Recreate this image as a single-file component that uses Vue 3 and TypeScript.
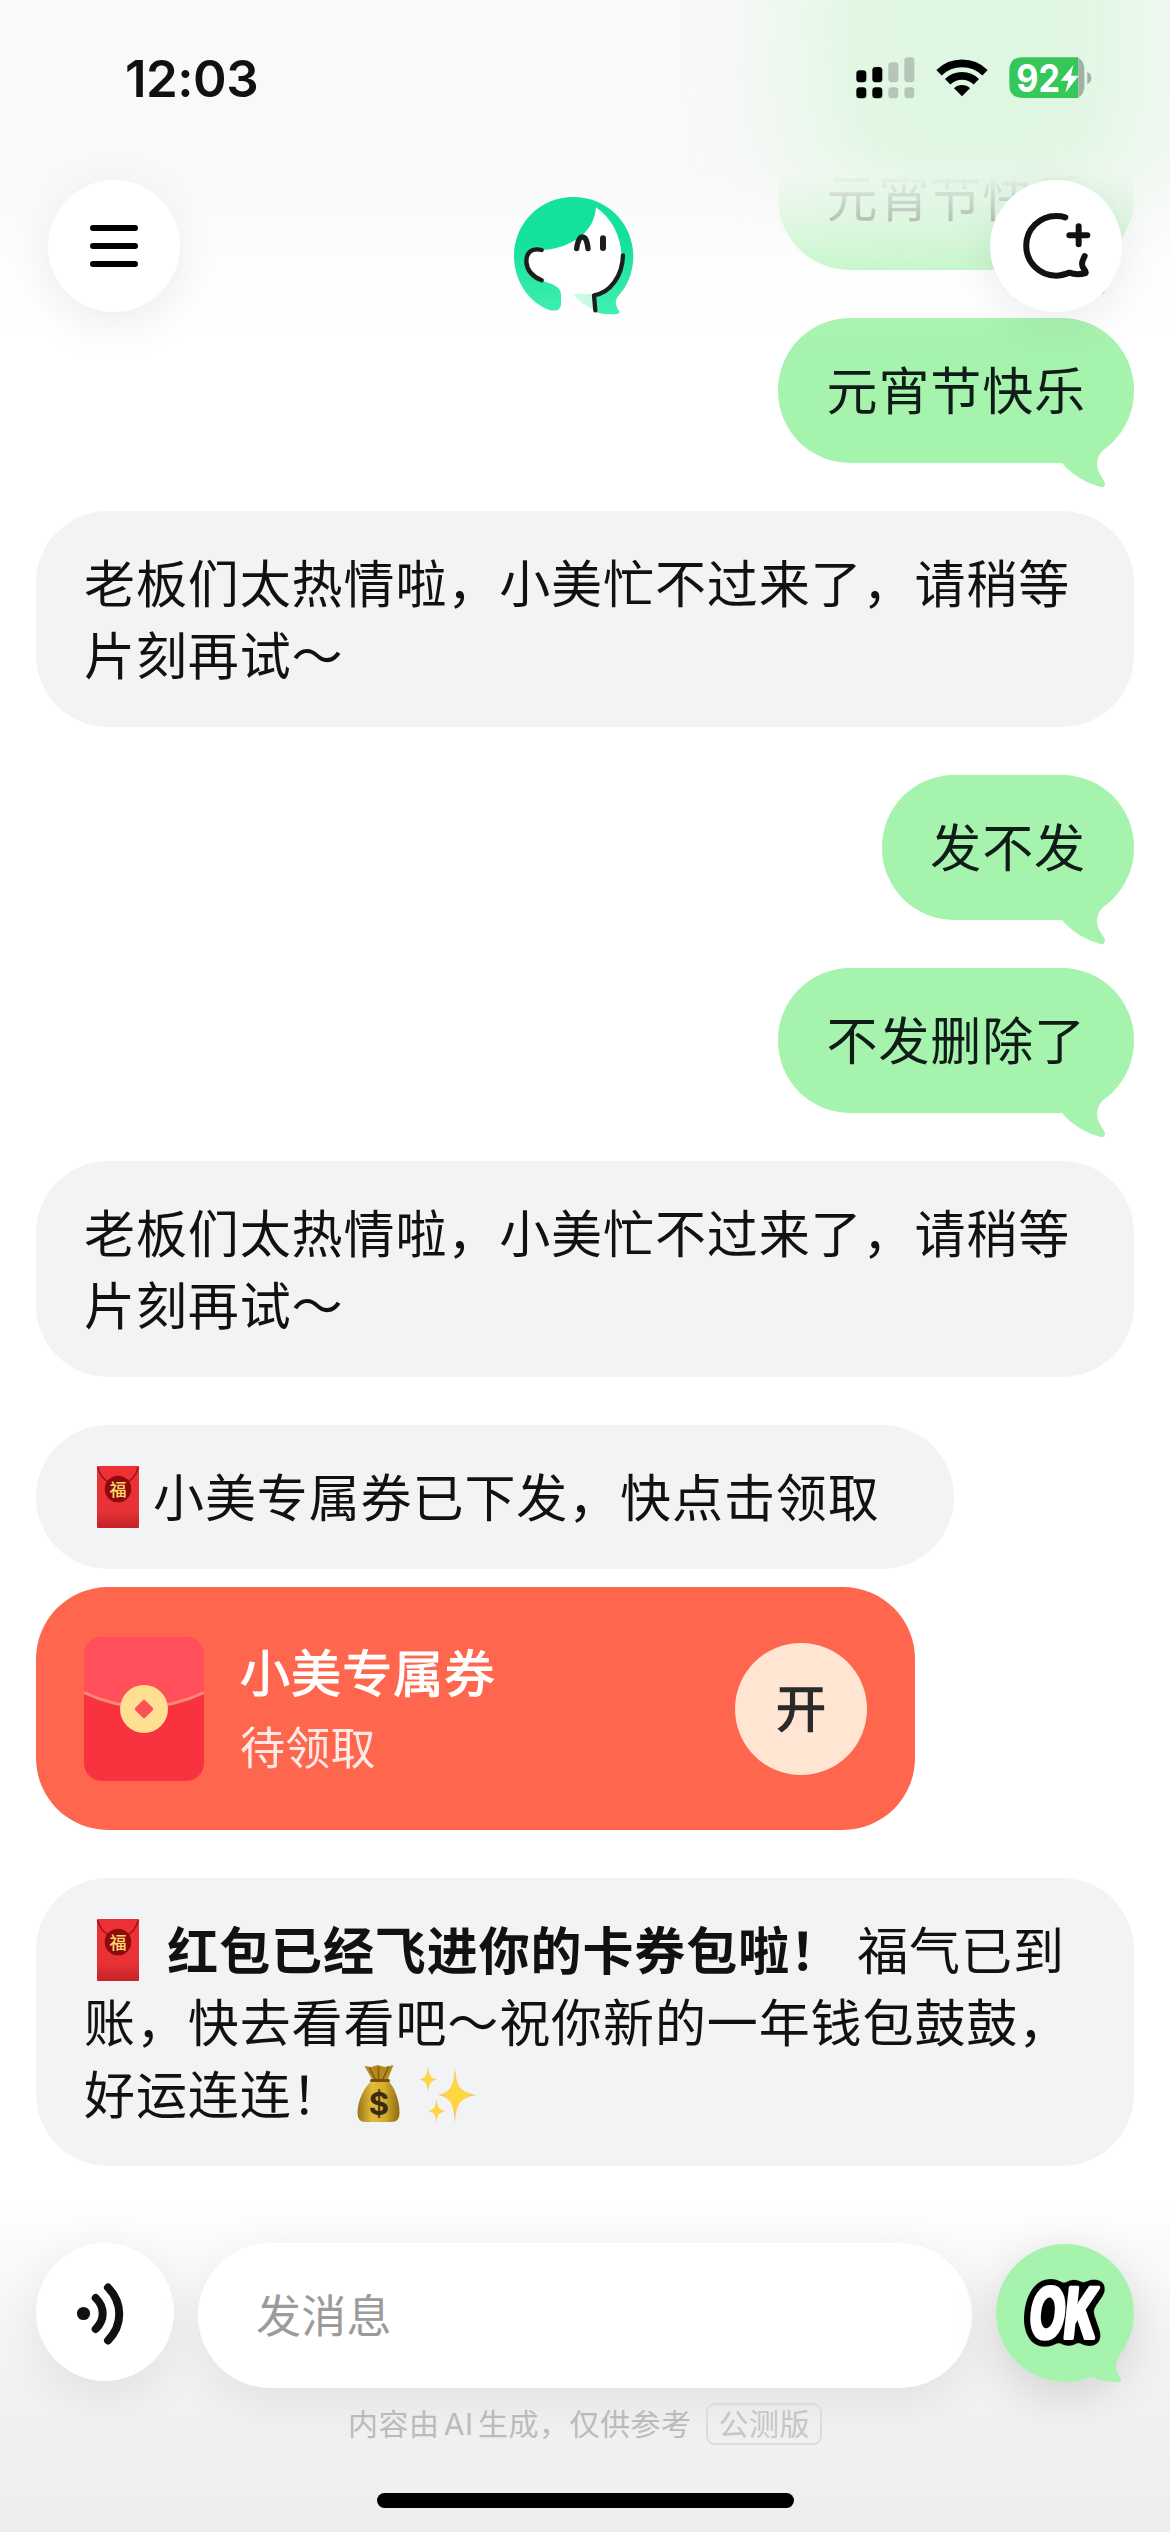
<script setup lang="ts">
interface UserMessage {
  kind: 'user'
  text: string
}
interface BotMessage {
  kind: 'bot'
  text: string
}
type Message = UserMessage | BotMessage

const messages: Message[] = [
  { kind: 'user', text: '元宵节快乐' },
  { kind: 'user', text: '元宵节快乐' },
  { kind: 'bot', text: '老板们太热情啦，小美忙不过来了，请稍等片刻再试～' },
  { kind: 'user', text: '发不发' },
  { kind: 'user', text: '不发删除了' },
  { kind: 'bot', text: '老板们太热情啦，小美忙不过来了，请稍等片刻再试～' },
]
</script>

<template>
  <div class="screen">
    <svg class="defs" width="0" height="0" aria-hidden="true">
      <defs>
        <linearGradient id="envRed" x1="0" y1="0" x2="0" y2="1">
          <stop offset="0" stop-color="#ee3035" />
          <stop offset="0.7" stop-color="#e83336" />
          <stop offset="1" stop-color="#c32327" />
        </linearGradient>
        <linearGradient id="bagGold" x1="0" y1="0" x2="1" y2="0">
          <stop offset="0" stop-color="#9a7414" />
          <stop offset="0.35" stop-color="#e2bb3a" />
          <stop offset="0.65" stop-color="#d6ab2c" />
          <stop offset="1" stop-color="#8f6a12" />
        </linearGradient>
        <radialGradient id="spark">
          <stop offset="0" stop-color="#ffd83a" />
          <stop offset="0.5" stop-color="#ffd44a" />
          <stop offset="1" stop-color="#f7b77a" />
        </radialGradient>
        <symbol id="redEnvelope" viewBox="0 0 68 72">
          <rect x="13" y="5" width="42" height="62" rx="1" fill="url(#envRed)" />
          <path d="M13.500 6C16 15 21 20 27 22M54.500 6C52 15 47 20 41 22" fill="none" stroke="#9c1519" stroke-width="1.500" />
          <circle cx="34" cy="28" r="13.300" fill="#8d0a0e" />
        </symbol>
      </defs>
    </svg>

    <main class="chat">
      <template v-for="(m, i) in messages" :key="i">
        <div v-if="m.kind === 'user'" class="bubble user">
          {{ m.text }}
          <svg class="tail" viewBox="0 0 80 60"><path d="M53 13C44 21 42 28 43.500 35C45 42 50 46 51 50Q51 55 46.500 54C32 50 18 42 8 30L20 8Z" fill="#a6f3ae" /></svg>
        </div>
        <div v-else class="bubble bot wide">{{ m.text }}</div>
      </template>

      <div class="coupon-group">
        <div class="bubble bot notice">
          <svg class="emoji lead" viewBox="0 0 68 72"><use href="#redEnvelope" /><text x="34" y="34.500" class="fu">福</text></svg>小美专属券已下发，快点击领取
        </div>
        <div class="coupon">
          <svg class="packet" viewBox="0 0 120 144">
            <rect width="120" height="144" rx="18" fill="#f9323f" />
            <path d="M18 0H102A18 18 0 0 1 120 18V55.500Q60 84 0 55.500V18A18 18 0 0 1 18 0Z" fill="#ff4f5a" />
            <path d="M0 55.500Q60 84 120 55.500" fill="none" stroke="#ff8a78" stroke-width="3" />
            <circle cx="60" cy="73" r="24" fill="#e82c38" opacity="0.5" />
            <circle cx="60" cy="72" r="24" fill="#ffdf92" />
            <rect x="53" y="65" width="14" height="14" rx="2" fill="#f9505a" transform="rotate(45 60 72)" />
          </svg>
          <div class="coupon-text">
            <div class="coupon-title">小美专属券</div>
            <div class="coupon-state">待领取</div>
          </div>
          <button class="open">开</button>
        </div>
      </div>

      <div class="bubble bot wide">
        <svg class="emoji" viewBox="0 0 68 72"><use href="#redEnvelope" /><text x="34" y="34.500" class="fu">福</text></svg>&nbsp;<b>红包已经飞进你的卡券包啦！</b> 福气已到账，快去看看吧～祝你新的一年钱包鼓鼓，好运连连！<svg class="emoji" viewBox="-0.500 0 68 72">
          <path d="M20 8L27 9L33 7L40 9L49 7L43 22H28Z" fill="#b48a1c" />
          <path d="M25 10L31 22M34 9V22M44 9L38 22" stroke="#7d5c10" stroke-width="1.500" fill="none" />
          <path d="M28 22H43C50 29 55 42 55 55Q55 64 47 64H21Q13 64 13 55C13 42 20 29 28 22Z" fill="url(#bagGold)" />
          <path d="M27 22.500H44" stroke="#7a4c12" stroke-width="3" stroke-linecap="round" />
          <text x="34.500" y="57" class="dollar">$</text>
        </svg><svg class="emoji" viewBox="-1 0 68 72">
          <path d="M42 9C43.500 28 46 34 64 37C46 40 43.500 46 42 65C40.500 46 38 40 25 37C38 34 40.500 28 42 9Z" fill="url(#spark)" />
          <path d="M15 8C16 17 17 20 24 21.500C17 23 16 26 15 34C14 26 13 23 6.500 21.500C13 20 14 17 15 8Z" fill="url(#spark)" />
          <path d="M23.500 41C24.500 49 25.500 51.500 33 53C25.500 54.500 24.500 57 23.500 65C22.500 57 21.500 54.500 15 53C21.500 51.500 22.500 49 23.500 41Z" fill="url(#spark)" />
        </svg>
      </div>
    </main>

    <div class="top-fade"></div>
    <div class="glow"><i></i></div>

    <header class="top">
      <div class="status">
        <span class="time">12:03</span>
        <svg class="status-icons" viewBox="0 0 720 126">
          <g fill="#000">
            <rect x="1" y="40" width="30" height="36" rx="10" /><rect x="49" y="30" width="30" height="46" rx="10" />
            <rect x="1" y="91" width="30" height="33" rx="10" /><rect x="49" y="91" width="30" height="33" rx="10" />
          </g>
          <g fill="#b5c6b8">
            <rect x="97" y="16" width="30" height="60" rx="10" /><rect x="145" y="1" width="30" height="75" rx="10" />
            <rect x="97" y="91" width="30" height="33" rx="10" /><rect x="145" y="91" width="30" height="33" rx="10" />
          </g>
          <g transform="translate(-467 -170)">
            <path d="M716 217A99 99 0 0 1 854 217M742 244A61.500 61.500 0 0 1 828 244" fill="none" stroke="#000" stroke-width="23" />
            <path d="M785 288L761 264A34 34 0 0 1 809 264Z" />
            <path d="M967 171H1134V293H967Q927 293 927 253V211Q927 171 967 171Z" fill="#35c759" />
            <path d="M1134 173Q1152 181 1152 208V256Q1152 283 1134 291Z" fill="#a3aea5" />
            <path d="M1161 215Q1173 220 1173 233Q1173 246 1161 251Z" fill="#a3aea5" />
            <text x="948" y="274" class="pct" textLength="131" lengthAdjust="spacingAndGlyphs">92</text>
            <path d="M1119 194L1081 241H1104L1095 277L1135 226H1112Z" fill="#fff" />
          </g>
        </svg>
      </div>
      <div class="nav">
        <button class="round"><svg width="48" height="42" viewBox="0 0 48 42"><path d="M3 3H45M3 21H45M3 39H45" stroke="#000" stroke-width="6" stroke-linecap="round" /></svg></button>
        <svg class="avatar" viewBox="72 52 360 354">
          <defs>
            <linearGradient id="hair" x1="0" y1="0" x2="0" y2="1"><stop offset="0.400" stop-color="#14e29b" /><stop offset="1" stop-color="#42efaf" /></linearGradient>
          </defs>
          <path d="M318 83L155 205L110 210L105 280L213 320V392L316 395L400 300L405 200Z" fill="#fff" />
          <path d="M318 83C314 132 290 165 240 190C212 204 185 210 158 211C125 206 108 222 108 245C110 272 128 292 155 303C190 313 213 322 213 345V372C213 390 200 396 178 391C115 370 72 300 72 230C72 130 150 52 250 52C350 52 430 130 430 230C430 280 410 322 387 347C373 362 375 375 388 396C390 404 380 404 360 404C345 404 330 401 318 397L312 350C360 335 392 290 395 230C393 170 365 115 318 83Z" fill="url(#hair)" />
          <path d="M250 342L308 343L310 389C285 378 265 364 250 342Z" fill="#cbfae4" />
          <path d="M155 211C122 203 108 222 109 247C111 272 128 291 155 302M399 227C397 290 360 340 312 347L316 392" fill="none" stroke="#1b1e1d" stroke-width="13" stroke-linecap="round" stroke-linejoin="round" />
          <path d="M260 207C263 184 269 172 277 172C286 172 292 184 294 207" fill="none" stroke="#1b1e1d" stroke-width="16" stroke-linecap="round" />
          <path d="M339 176V205" stroke="#1b1e1d" stroke-width="18" stroke-linecap="round" />
        </svg>
        <button class="round">
          <svg width="132" height="132" viewBox="870 540 396 396" fill="none" stroke="#111" stroke-width="18" stroke-linecap="round" stroke-linejoin="round">
            <path d="M1096 652C1087 649 1078 648 1068 648A89.500 89.500 0 0 0 1068 827C1083 827 1095 823 1108 818C1122 823 1143 823 1157 819C1160 812 1146 806 1146 792C1146 782 1151 776 1154 768" />
            <path d="M1108 706H1162M1136 679V733" />
          </svg>
        </button>
      </div>
    </header>

    <footer class="bottom">
      <div class="composer">
        <button class="round voice">
          <svg width="138" height="138" viewBox="0 0 138 138" fill="none" stroke="#111" stroke-width="8" stroke-linecap="round">
            <circle cx="47.500" cy="70.500" r="6.600" fill="#111" stroke="none" />
            <path d="M59.700 55C69 64 69 77 59.700 86M72 44.500C87 60 87 82 72 97.500" />
          </svg>
        </button>
        <div class="input">发消息</div>
        <button class="ok">
          <svg width="138" height="138" viewBox="0 0 138 138">
            <defs>
              <filter id="okOutline" filterUnits="userSpaceOnUse" x="0" y="0" width="138" height="138" color-interpolation-filters="sRGB">
                <feMorphology in="SourceGraphic" operator="dilate" radius="1 0" result="fat" />
                <feGaussianBlur in="fat" stdDeviation="4.500" result="soft" />
                <feColorMatrix in="soft" type="matrix" values="0 0 0 0 0  0 0 0 0 0  0 0 0 0 0  0 0 0 30 -1.500" result="outline" />
                <feMerge><feMergeNode in="outline" /><feMergeNode in="fat" /></feMerge>
              </filter>
            </defs>
            <circle cx="69" cy="69" r="69" fill="#a6f3ae" />
            <path d="M131 100C123 112 119 117 120 124C121 130 125 133 125 136Q125 138 121 138C112 138 104 137 96 133L90 100Z" fill="#a6f3ae" />
            <g filter="url(#okOutline)">
              <text class="ok-text" x="0" y="0" transform="translate(65 94) skewX(-6) scale(0.650 1)">OK</text>
            </g>
          </svg>
        </button>
      </div>
      <div class="disclaimer"><span class="note">内容由 AI 生成，仅供参考</span><span class="beta">公测版</span></div>
      <div class="home"></div>
    </footer>
  </div>
</template>

<style>
body {
  margin: 0;
  background: #fff;
}
</style>

<style scoped>
.screen {
  position: relative;
  width: 1170px;
  height: 2532px;
  overflow: hidden;
  background: #fff;
  color: #111;
  font-family: Inter, "Noto Sans CJK SC", sans-serif;
  text-spacing-trim: space-all;
}
button {
  border: 0;
  padding: 0;
  font: inherit;
  color: inherit;
}
svg {
  display: block;
  overflow: visible;
}
.defs {
  position: absolute;
}

.chat {
  display: flex;
  flex-direction: column;
  align-items: flex-start;
  gap: 48px;
  padding: 125px 36px 0;
}
.bubble {
  box-sizing: border-box;
  padding: 38px 48px 34px;
  border-radius: 72px;
  font-size: 51px;
  line-height: 72px;
  letter-spacing: 0.9px;
}
.user {
  position: relative;
  align-self: flex-end;
  height: 145px;
  background: #a6f3ae;
  color: #101c18;
}
.tail {
  position: absolute;
  right: 0;
  bottom: -30px;
  width: 80px;
  height: 60px;
}
.bot {
  background: #f2f3f5;
}
.wide {
  width: 1098px;
}
.emoji {
  display: inline-block;
  width: 68px;
  height: 72px;
  margin: -2px 0 2px;
  vertical-align: top;
}
.lead {
  margin-right: 1px;
}
.fu {
  font: 500 17px "Noto Sans CJK SC", sans-serif;
  fill: #ffd76a;
  text-anchor: middle;
  letter-spacing: 0;
}
.dollar {
  font: 700 31px Inter, sans-serif;
  fill: #3a2c10;
  text-anchor: middle;
  letter-spacing: 0;
}
.coupon-group {
  display: flex;
  flex-direction: column;
  gap: 18px;
}
.notice {
  width: 918px;
}
.coupon {
  box-sizing: border-box;
  display: flex;
  align-items: center;
  width: 879px;
  height: 243px;
  padding: 0 48px;
  border-radius: 72px;
  background: #ff664e;
}
.packet {
  width: 120px;
  height: 144px;
}
.coupon-text {
  flex: 1;
  margin-left: 36px;
  padding-top: 3px;
  color: #fff;
}
.coupon-title {
  font-size: 50px;
  line-height: 76px;
  letter-spacing: 1.1px;
  -webkit-text-stroke: 1.2px #fff;
}
.coupon-state {
  font-size: 45px;
  line-height: 73px;
  letter-spacing: 0.3px;
  opacity: 0.86;
}
.open {
  width: 132px;
  height: 132px;
  border-radius: 50%;
  background: #ffe5d2;
  color: #2b2b2b;
  font-size: 50px;
  line-height: 133px;
  -webkit-text-stroke: 1.4px #2b2b2b;
}

.top-fade {
  position: absolute;
  inset: 0 0 auto;
  height: 340px;
  background: linear-gradient(
    #f9f9f9 0 174px,
    rgba(249, 249, 249, 0.86) 195px,
    rgba(250, 250, 250, 0.68) 228px,
    rgba(252, 252, 252, 0.4) 270px,
    rgba(254, 254, 254, 0.08) 318px,
    rgba(255, 255, 255, 0) 340px
  );
}
.glow {
  position: absolute;
  inset: 0 0 auto;
  height: 340px;
  overflow: hidden;
  mask-image: linear-gradient(#000 0 150px, transparent 310px);
}
.glow i {
  position: absolute;
  top: -180px;
  left: 800px;
  width: 350px;
  height: 410px;
  border-radius: 110px;
  background: #a6f3ae;
  opacity: 0.31;
  filter: blur(58px);
}

.top {
  position: absolute;
  inset: 0 0 auto;
}
.status {
  display: flex;
  justify-content: space-between;
  align-items: center;
  height: 156px;
  padding: 0 74px 0 125px;
}
.time {
  font-size: 51px;
  font-weight: 600;
  letter-spacing: -0.5px;
}
.status-icons {
  width: 240px;
  height: 42px;
}
.pct {
  font: 700 115px Inter, sans-serif;
  fill: #fff;
}
.nav {
  display: flex;
  justify-content: space-between;
  padding: 24px 48px 0;
}
.round {
  display: flex;
  align-items: center;
  justify-content: center;
  width: 132px;
  height: 132px;
  border-radius: 50%;
  background: #fff;
  box-shadow: 0 12px 48px rgba(0, 0, 0, 0.08);
}
.avatar {
  width: 120px;
  height: 118px;
  margin: 17px 0 0 -22px;
}

.bottom {
  position: absolute;
  inset: auto 0 0;
  height: 332px;
  background: linear-gradient(rgba(255, 255, 255, 0), #fbfbfb 40px, #f2f2f2 180px, #eeeeee);
}
.composer {
  display: flex;
  gap: 24px;
  padding: 43px 36px 0;
}
.voice {
  width: 138px;
  height: 138px;
}
.input {
  flex: 1;
  height: 145px;
  padding-left: 58px;
  border-radius: 73px;
  background: #fff;
  box-shadow: 0 12px 48px rgba(0, 0, 0, 0.07);
  color: #9b9b9b;
  font-size: 45px;
  line-height: 147px;
  letter-spacing: 0.3px;
}
.ok {
  width: 138px;
  height: 138px;
  margin-top: 1px;
  border-radius: 50%;
  background: none;
  box-shadow: 0 12px 48px rgba(0, 0, 0, 0.14);
}
.ok-text {
  font: 600 69px Inter, sans-serif;
  fill: #fff;
  stroke: #fff;
  stroke-width: 4px;
  stroke-linejoin: round;
  text-anchor: middle;
}
.disclaimer {
  display: flex;
  align-items: center;
  justify-content: center;
  gap: 14px;
  height: 42px;
  margin-top: 15px;
  color: #bbb;
  font-size: 30px;
  line-height: 42px;
  letter-spacing: 0.5px;
}
.note {
  word-spacing: -4.5px;
}
.beta {
  box-sizing: border-box;
  height: 42px;
  padding: 0 10px 0 11px;
  border: 2px solid #dcdcdc;
  border-radius: 9px;
  line-height: 39px;
  color: #c6c6c6;
}
.home {
  width: 417px;
  height: 15px;
  margin: 48px auto 0;
  border-radius: 8px;
  background: #000;
}
</style>
